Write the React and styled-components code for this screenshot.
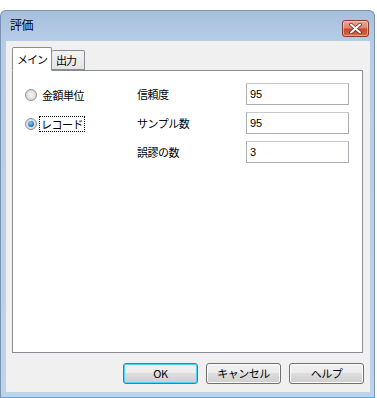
import styled, { createGlobalStyle } from 'styled-components'

const GlobalStyle = createGlobalStyle`
  html, body {
    margin: 0;
    padding: 0;
    background: #ffffff;
  }
  body {
    font-family: "Noto Sans CJK JP", "Liberation Sans", sans-serif;
    font-size: 11px;
    letter-spacing: -0.5px;
    color: #000;
  }
`

const fields = [
  { label: '信頼度', value: '95' },
  { label: 'サンプル数', value: '95' },
  { label: '誤謬の数', value: '3' },
]

const App = () => {
  return (
    <>
      <GlobalStyle />
      <Window>
        <TitleBar>
          <Title>評価</Title>
          <CloseButton>
            <svg width="13" height="11" viewBox="0 0 13 11">
              <path d="M2 1.5 L11 9.5 M11 1.5 L2 9.5" stroke="#6b2a1e" strokeWidth="3.6" strokeLinecap="round" />
              <path d="M2 1.5 L11 9.5 M11 1.5 L2 9.5" stroke="#ffffff" strokeWidth="2" strokeLinecap="round" />
            </svg>
          </CloseButton>
        </TitleBar>
        <Client>
          <Tabs>
            <Tab $active>メイン</Tab>
            <Tab>出力</Tab>
          </Tabs>
          <Panel>
            <RadioGroup>
              <RadioRow>
                <Radio />
                <RadioLabel>金額単位</RadioLabel>
              </RadioRow>
              <RadioRow>
                <Radio $checked />
                <RadioLabel $focused>レコード</RadioLabel>
              </RadioRow>
            </RadioGroup>
            <FieldGrid>
              {fields.map((f) => (
                <FieldRow key={f.label}>
                  <FieldLabel>{f.label}</FieldLabel>
                  <Input readOnly value={f.value} />
                </FieldRow>
              ))}
            </FieldGrid>
          </Panel>
          <ButtonRow>
            <Button $default>OK</Button>
            <Button>キャンセル</Button>
            <Button>ヘルプ</Button>
          </ButtonRow>
        </Client>
      </Window>
    </>
  )
}

export default App

const Window = styled.div`
  box-sizing: border-box;
  margin-top: 10px;
  width: 375px;
  height: 388px;
  border: 1px solid #7b93b0;
  border-bottom: 1px solid #3db6e0;
  border-radius: 6px 6px 0 0;
  background: linear-gradient(#a6bfdc 0px, #b6cde7 30px, #bcd3ea 100%);
  padding: 0 4px 5px 5px;
  display: flex;
  flex-direction: column;
`

const TitleBar = styled.div`
  height: 30px;
  display: flex;
  justify-content: space-between;
  align-items: flex-start;
  margin-left: -5px;
  margin-right: -4px;
  padding: 0 5px 0 9px;
`

const Title = styled.span`
  font-size: 12px;
  line-height: 30px;
  margin-top: -1px;
`

const CloseButton = styled.div`
  box-sizing: border-box;
  margin-top: 9px;
  width: 27px;
  height: 17px;
  border: 1px solid #8a3a2c;
  border-radius: 3px;
  background: linear-gradient(#e9a898 0%, #dd8670 45%, #c9482d 55%, #cf6a4c 100%);
  box-shadow: inset 0 0 0 1px rgba(255, 220, 210, 0.55);
  display: flex;
  align-items: center;
  justify-content: center;
`

const Client = styled.div`
  box-sizing: border-box;
  flex: 1;
  background: #f0f0f0;
  padding: 6px 7px 0 6px;
  display: flex;
  flex-direction: column;
`

const Tabs = styled.div`
  display: flex;
  align-items: flex-end;
  height: 23px;
  position: relative;
  z-index: 1;
`

const Tab = styled.div`
  box-sizing: border-box;
  height: ${(p) => (p.$active ? '24px' : '20px')};
  width: ${(p) => (p.$active ? '40px' : '33px')};
  border: 1px solid #898c95;
  border-bottom: ${(p) => (p.$active ? '1px solid #ffffff' : '1px solid #898c95')};
  border-left: ${(p) => (p.$active ? '1px solid #898c95' : 'none')};
  margin-bottom: ${(p) => (p.$active ? '-1px' : '0')};
  background: ${(p) => (p.$active ? '#ffffff' : 'linear-gradient(#f3f3f3, #e4e4e4)')};
  border-radius: 2px 2px 0 0;
  padding: ${(p) => (p.$active ? '3px 0 0 4px' : '1px 0 0 4px')};
  white-space: nowrap;
  overflow: hidden;
  font-size: 11px;
  letter-spacing: -1px;
  line-height: 16px;
`

const Panel = styled.div`
  box-sizing: border-box;
  height: 283px;
  background: #ffffff;
  border: 1px solid #898c95;
  padding: 12px 0 0 12px;
  display: flex;
`

const RadioGroup = styled.div`
  width: 112px;
  display: grid;
  grid-auto-rows: 22px;
  row-gap: 7px;
  align-content: start;
  padding-top: 1px;
`

const RadioRow = styled.div`
  display: flex;
  align-items: center;
`

const Radio = styled.span`
  box-sizing: border-box;
  width: 12px;
  height: 12px;
  border-radius: 50%;
  border: 1px solid #8e8f8f;
  background: radial-gradient(circle at 50% 50%, #f4f4f4 0%, #dcdcdc 70%, #cfcfcf 100%);
  position: relative;
  flex-shrink: 0;
  &::after {
    content: '';
    display: ${(p) => (p.$checked ? 'block' : 'none')};
    position: absolute;
    left: 2px;
    top: 2px;
    width: 6px;
    height: 6px;
    border-radius: 50%;
    background: radial-gradient(circle at 40% 35%, #8fd2ff 0%, #2f7fd0 55%, #0f3f88 100%);
  }
`

const RadioLabel = styled.span`
  margin-left: ${(p) => (p.$focused ? '2px' : '3px')};
  padding: 0 1px;
  line-height: 14px;
  white-space: nowrap;
  border: 1px dotted ${(p) => (p.$focused ? '#000000' : 'transparent')};
`

const FieldGrid = styled.div`
  display: grid;
  grid-auto-rows: 22px;
  row-gap: 7px;
  align-content: start;
`

const FieldRow = styled.div`
  display: grid;
  grid-template-columns: 109px 103px;
  align-items: center;
`

const FieldLabel = styled.span`
  line-height: 14px;
  white-space: nowrap;
`

const Input = styled.input`
  box-sizing: border-box;
  width: 103px;
  height: 22px;
  border: 1px solid #abadb3;
  border-top-color: #c6c8cc;
  border-radius: 1px;
  padding: 0 3px;
  font-family: "Liberation Sans", sans-serif;
  font-size: 11px;
  color: #000;
  background: #ffffff;
  outline: none;
`

const ButtonRow = styled.div`
  display: flex;
  justify-content: flex-end;
  gap: 8px;
  margin-top: 10px;
  margin-right: -1px;
`

const Button = styled.button`
  box-sizing: border-box;
  width: 75px;
  height: 21px;
  padding: 0;
  border: 1px solid ${(p) => (p.$default ? '#3c7fb1' : '#707070')};
  border-radius: 3px;
  background: linear-gradient(#f2f2f2 0%, #ebebeb 50%, #dddddd 50%, #cfcfcf 100%);
  box-shadow: ${(p) => (p.$default ? 'inset 0 0 0 1px #48d3f8' : 'inset 0 0 0 1px #fcfcfc')};
  font-family: "Noto Sans CJK JP", "Liberation Sans", sans-serif;
  font-size: 11px;
  letter-spacing: -0.5px;
  color: #000;
  line-height: 17px;
`
